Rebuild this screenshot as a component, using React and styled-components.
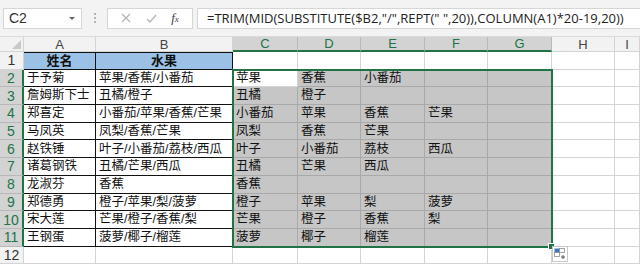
import styled, { createGlobalStyle } from 'styled-components'

const GlobalStyle = createGlobalStyle`
  html, body {
    margin: 0;
    padding: 0;
    background: #ffffff;
  }
  body {
    font-family: "Liberation Sans", "Noto Sans CJK SC", sans-serif;
  }
`

const cols = ['A', 'B', 'C', 'D', 'E', 'F', 'G', 'H', 'I']
const selCols = ['C', 'D', 'E', 'F', 'G']

const rows = [
  ['于予菊', '苹果/香蕉/小番茄'],
  ['詹姆斯下士', '丑橘/橙子'],
  ['郑喜定', '小番茄/苹果/香蕉/芒果'],
  ['马凤英', '凤梨/香蕉/芒果'],
  ['赵铁锤', '叶子/小番茄/荔枝/西瓜'],
  ['诸葛钢铁', '丑橘/芒果/西瓜'],
  ['龙淑芬', '香蕉'],
  ['郑德勇', '橙子/苹果/梨/菠萝'],
  ['宋大莲', '芒果/橙子/香蕉/梨'],
  ['王钢蛋', '菠萝/椰子/榴莲'],
]

const Page = styled.div`
  width: 640px;
  height: 265px;
  overflow: hidden;
  background: #fff;
  display: flex;
  flex-direction: column;
`

const FormulaBar = styled.div`
  height: 37px;
  flex: none;
  background: #f3f3f3;
  display: flex;
  align-items: center;
  padding: 0 0 0 3px;
  box-sizing: border-box;
  border-bottom: 1px solid #dadada;
`

const NameBox = styled.div`
  width: 79px;
  height: 21px;
  box-sizing: border-box;
  background: #fff;
  border: 1px solid #d6d6d6;
  display: flex;
  align-items: center;
  justify-content: space-between;
  padding: 0 6px 0 5px;
  font-family: "Liberation Sans", sans-serif;
  font-size: 14px;
  color: #333;
`

const Caret = styled.span`
  width: 0;
  height: 0;
  border-left: 3px solid transparent;
  border-right: 3px solid transparent;
  border-top: 3px solid #666;
`

const Grip = styled.div`
  width: 25px;
  display: flex;
  flex-direction: column;
  align-items: center;
  gap: 2px;
  span {
    width: 2px;
    height: 2px;
    background: #b4b4b4;
  }
`

const FnBox = styled.div`
  width: 86px;
  height: 21px;
  box-sizing: border-box;
  background: #fff;
  border: 1px solid #d6d6d6;
  display: flex;
  align-items: center;
  justify-content: space-around;
  padding: 0 6px;
  margin-right: 4px;
`

const FxLabel = styled.span`
  font-family: "Liberation Serif", serif;
  font-style: italic;
  font-size: 13px;
  color: #444;
  span {
    font-size: 9px;
  }
`

const FormulaInput = styled.div`
  flex: 1;
  height: 21px;
  box-sizing: border-box;
  background: #fff;
  border: 1px solid #d6d6d6;
  border-right: none;
  display: flex;
  align-items: center;
  padding-left: 9px;
  font-family: "Open Sans", "Liberation Sans", sans-serif;
  font-size: 13px;
  color: #222;
  white-space: pre;
  overflow: hidden;
`

const Sheet = styled.div`
  flex: 1;
  display: grid;
  grid-template-columns: 24px 72px 137px 65px 63px 64px 63px 64px 63px 25px;
  grid-template-rows: 15px repeat(12, 17.7px);
  position: relative;
  background: #fff;
`

const ColHead = styled.div`
  background: ${p => (p.$sel ? '#d3d3d3' : '#f2f2f2')};
  color: ${p => (p.$sel ? '#217346' : '#444')};
  border-right: 1px solid ${p => (p.$sel ? '#b8b8b8' : '#d4d4d4')};
  border-bottom: ${p => (p.$sel ? '2px solid #217346' : '1px solid #d4d4d4')};
  font-family: "Liberation Sans", sans-serif;
  font-size: 13px;
  display: flex;
  align-items: center;
  justify-content: center;
  box-sizing: border-box;
  line-height: 1;
`

const Corner = styled.div`
  background: #f2f2f2;
  border-right: 1px solid #d4d4d4;
  border-bottom: 1px solid #d4d4d4;
  position: relative;
  &::after {
    content: '';
    position: absolute;
    right: 2px;
    bottom: 2px;
    border-left: 9px solid transparent;
    border-bottom: 9px solid #c8c8c8;
  }
`

const RowHead = styled.div`
  background: ${p => (p.$sel ? '#d3d3d3' : '#f2f2f2')};
  color: ${p => (p.$sel ? '#217346' : '#333')};
  border-right: ${p => (p.$sel ? '2px solid #217346' : '1px solid #d4d4d4')};
  border-bottom: 1px solid ${p => (p.$sel ? '#b8b8b8' : '#d4d4d4')};
  font-family: "Liberation Sans", sans-serif;
  font-size: 14px;
  display: flex;
  align-items: center;
  justify-content: center;
  box-sizing: border-box;
`

const Cell = styled.div`
  box-sizing: border-box;
  background: ${p =>
    p.$fill === 'blue' ? '#9bc2e6' : p.$fill === 'sel' ? '#c6c6c6' : '#fff'};
  border-right: 1px solid ${p => (p.$table ? '#111' : p.$fill === 'sel' ? '#a9a9a9' : '#d4d4d4')};
  border-bottom: 1px solid ${p => (p.$table ? '#111' : p.$fill === 'sel' ? '#a9a9a9' : '#d4d4d4')};
  border-top: ${p => (p.$top ? '1px solid #111' : 'none')};
  font-family: "Liberation Sans", "Noto Sans CJK SC", sans-serif;
  font-size: ${p => (p.$bold ? '13px' : '12.5px')};
  font-weight: ${p => (p.$bold ? 700 : 400)};
  color: #111;
  display: flex;
  align-items: center;
  justify-content: ${p => (p.$center ? 'center' : 'flex-start')};
  padding-left: ${p => (p.$center ? 0 : '3px')};
  white-space: nowrap;
  overflow: hidden;
  line-height: 1;
`

/* selection outline over C2:G11, placed on the grid area but taken out of auto-placement */
const Selection = styled.div`
  position: absolute;
  grid-column: 4 / 9;
  grid-row: 3 / 13;
  top: -1px;
  left: -1px;
  right: -1px;
  bottom: -1px;
  border: 2px solid #217346;
  pointer-events: none;
  z-index: 2;
`

const FillHandle = styled.span`
  position: absolute;
  right: -4px;
  bottom: -4px;
  width: 5px;
  height: 5px;
  background: #217346;
  border: 1px solid #fff;
`

const QuickAnalysis = styled.div`
  position: absolute;
  left: 552px;
  top: 209px;
  width: 16px;
  height: 16px;
  box-sizing: border-box;
  background: #fff;
  border: 1px solid #c8c8c8;
  z-index: 3;
  display: flex;
  align-items: center;
  justify-content: center;
`

function XIcon() {
  return (
    <svg width="10" height="10" viewBox="0 0 10 10">
      <path d="M1 1 L9 9 M9 1 L1 9" stroke="#b4b4b4" strokeWidth="1.2" fill="none" />
    </svg>
  )
}

function CheckIcon() {
  return (
    <svg width="11" height="9" viewBox="0 0 11 9">
      <path d="M1 5 L4 8 L10 1" stroke="#b4b4b4" strokeWidth="1.2" fill="none" />
    </svg>
  )
}

function QuickIcon() {
  return (
    <svg width="12" height="12" viewBox="0 0 12 12">
      <rect x="0.5" y="0.5" width="5" height="4" fill="#3c78c8" />
      <rect x="5.5" y="0.5" width="5" height="4" fill="none" stroke="#8a8a8a" strokeWidth="0.8" />
      <rect x="0.5" y="4.5" width="5" height="4" fill="none" stroke="#8a8a8a" strokeWidth="0.8" />
      <path d="M7 9 H11 M9 7 V11" stroke="#555" strokeWidth="1" />
    </svg>
  )
}

function splitFruits(s) {
  const parts = s.split('/')
  return [0, 1, 2, 3, 4].map(i => parts[i] || '')
}

export default function App() {
  const formula = '=TRIM(MID(SUBSTITUTE($B2,"/",REPT(" ",20)),COLUMN(A1)*20-19,20))'
  return (
    <Page>
      <GlobalStyle />
      <FormulaBar>
        <NameBox>
          C2
          <Caret />
        </NameBox>
        <Grip>
          <span />
          <span />
          <span />
        </Grip>
        <FnBox>
          <XIcon />
          <CheckIcon />
          <FxLabel>
            f<span>x</span>
          </FxLabel>
        </FnBox>
        <FormulaInput>{formula}</FormulaInput>
      </FormulaBar>
      <Sheet>
        <Corner />
        {cols.map(c => (
          <ColHead key={c} $sel={selCols.includes(c)}>
            {c}
          </ColHead>
        ))}

        <RowHead>1</RowHead>
        <Cell $fill="blue" $bold $center $table $top>
          姓名
        </Cell>
        <Cell $fill="blue" $bold $center $table $top>
          水果
        </Cell>
        {selCols.concat(['H', 'I']).map(c => (
          <Cell key={c} />
        ))}

        {rows.map(([name, fruit], i) => (
          <Row key={i} n={i + 2} name={name} fruit={fruit} />
        ))}

        <RowHead>12</RowHead>
        {cols.map(c => (
          <Cell key={c} />
        ))}

        <Selection>
          <FillHandle />
        </Selection>
        <QuickAnalysis>
          <QuickIcon />
        </QuickAnalysis>
      </Sheet>
    </Page>
  )
}

function Row({ n, name, fruit }) {
  const parts = splitFruits(fruit)
  return (
    <>
      <RowHead $sel>{n}</RowHead>
      <Cell $table>{name}</Cell>
      <Cell $table>{fruit}</Cell>
      {parts.map((p, j) => (
        <Cell key={j} $fill={n === 2 && j === 0 ? undefined : 'sel'}>
          {p}
        </Cell>
      ))}
      <Cell />
      <Cell />
    </>
  )
}
